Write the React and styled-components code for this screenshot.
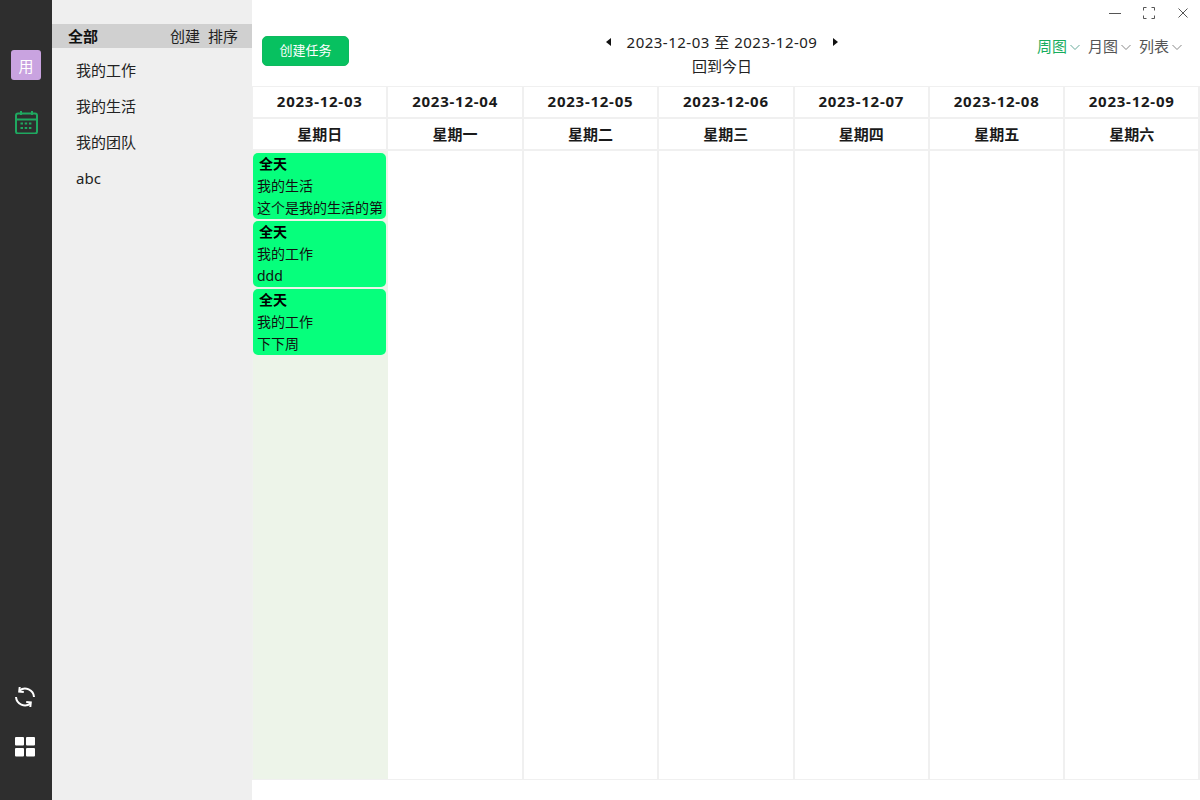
import React from 'react';
import styled, { createGlobalStyle } from 'styled-components';

const Global = createGlobalStyle`
  html, body { margin: 0; padding: 0; height: 100%; background: #fff; }
  #root { height: 100%; }
  * { box-sizing: border-box; }
  body { font-family: "Noto Sans", "Noto Sans CJK SC", sans-serif; font-size: 15px; color: #1a1a1a; }
`;

const Shell = styled.div`display: flex; width: 1200px; height: 800px; overflow: hidden; background: #fff;`;
const Rail = styled.nav`width: 52px; flex: none; background: #2e2e2e; display: flex; flex-direction: column; align-items: center; padding: 50px 0 43px;`;
const Avatar = styled.div`width: 30px; height: 30px; border-radius: 3px; background: #c9a3e0; color: #fff; font-size: 15px; display: flex; align-items: center; justify-content: center; margin-bottom: 30px;`;
const Spacer = styled.div`flex: 1;`;
const RailIcon = styled.div`display: flex; justify-content: center; margin-top: ${p => p.$gap || 0}px; margin-left: ${p => p.$shift || 0}px;`;

const Side = styled.aside`width: 200px; flex: none; background: #efefef; padding-top: 24px;`;
const SideHead = styled.div`height: 24px; background: #d0d0d0; display: flex; align-items: center; padding: 0 14px 2px 16px;`;
const SideTitle = styled.strong`font-weight: 700; font-size: 15px; color: #111; flex: 1;`;
const SideAction = styled.span`font-size: 15px; margin-left: 8px; color: #222;`;
const SideList = styled.ul`list-style: none; margin: 0; padding: 4px 0 0 24px;`;
const SideItem = styled.li`height: 36px; line-height: 36px; font-size: 15px; color: #222;`;

const Main = styled.main`flex: 1; display: flex; flex-direction: column; min-width: 0;`;
const TitleBar = styled.div`height: 24px; display: flex; justify-content: flex-end; align-items: center; gap: 20px; padding: 1px 10px 0 0;`;
const WinBtn = styled.svg`width: 14px; height: 14px; display: block; fill: none; stroke: #555; stroke-width: 1;`;
const Toolbar = styled.div`height: 62px; position: relative; display: flex; align-items: flex-start; justify-content: space-between; padding: 12px 18px 0 10px;`;
const Create = styled.button`width: 87px; height: 30px; border: 1px solid #0fb95e; border-radius: 5px; background: #07c160; color: #fff; font: inherit; font-size: 13px; padding: 0 0 3px; margin: 0;`;
const Center = styled.div`position: absolute; left: 0; right: 8px; top: 5px; display: flex; flex-direction: column; align-items: center; pointer-events: none;`;
const DateRow = styled.div`display: flex; align-items: center; height: 25px; font-size: 15px; letter-spacing: 0.5px; color: #222; gap: 15px;`;
const Today = styled.div`height: 24px; line-height: 24px; font-size: 15px; color: #222;`;
const Arrow = styled.svg`width: 6px; height: 8px; fill: #111; display: block;`;
const Views = styled.div`display: flex; gap: 8px; margin-top: -2px;`;
const View = styled.div`display: flex; align-items: center; gap: 3px; height: 23px; font-size: 15px; color: ${p => p.$active ? '#17ad5e' : '#555'};`;
const Chev = styled.svg`width: 10px; height: 10px; fill: none; stroke: ${p => p.$active ? '#6a9' : '#888'}; stroke-width: 1; margin-top: 2px;`;

const Board = styled.div`
  height: 694px; display: grid; grid-template-columns: repeat(6, 135.4px) 1fr; grid-template-rows: 32px 32px 1fr;
  border-top: 1px solid #f0f0f0; border-bottom: 1px solid #f0f0f0; border-left: 1px solid #f0f0f0;
`;
const HeadCell = styled.div`
  display: flex; align-items: center; justify-content: center; font-weight: 700; font-size: 15px; color: #1a1a1a;
  letter-spacing: ${p => p.$date ? '0.75px' : '0'};
  border-right: 2px solid #f0f0f0; border-bottom: 2px solid #f0f0f0; padding-bottom: 2px;
`;
const DayCol = styled.div`
  border-right: 2px solid ${p => p.$today ? 'transparent' : '#f0f0f0'}; background: ${p => p.$today ? '#edf4e9' : '#fff'};
  padding: 2px 0 0 0; display: flex; flex-direction: column; gap: 2px; min-width: 0;
`;
const Task = styled.div`height: 66px; width: 133px; background: #06ff7c; border-radius: 5px; padding: 1px 0 0 4px; font-size: 14px; color: #111;`;
const TaskLine = styled.div`height: 22px; line-height: 20px; white-space: nowrap; font-size: 14px; ${p => p.$bold ? 'font-weight: 700; padding-left: 2px; color: #000;' : ''}`;

const dates = ['03', '04', '05', '06', '07', '08', '09'];
const weeks = ['星期日', '星期一', '星期二', '星期三', '星期四', '星期五', '星期六'];
const tasks = [
  ['我的生活', '这个是我的生活的第'],
  ['我的工作', 'ddd'],
  ['我的工作', '下下周'],
];

const Caret = ({ active }) => <Chev $active={active} viewBox="0 0 10 10"><path d="M0.5 3 L5 7.5 L9.5 3" /></Chev>;

export default function App() {
  return (
    <Shell>
      <Global />
      <Rail>
        <Avatar>用</Avatar>
        <RailIcon>
          <svg width="24" height="24" viewBox="0 0 24 24" fill="none" stroke="#1fa860" strokeWidth="2">
            <rect x="2" y="3.5" width="21" height="20" rx="2" />
            <path d="M2 9.5h21M7 1v4M18 1v4" />
            <path d="M6.5 13.5h12M6.5 18h12" strokeDasharray="2.5 1.7" strokeWidth="1.8" />
          </svg>
        </RailIcon>
        <Spacer />
        <RailIcon $shift={-2}>
          <svg width="22" height="22" viewBox="0 0 22 22" fill="none" stroke="#fff" strokeWidth="2">
            <path d="M20 11 A9 9 0 0 0 5.5 4.5" />
            <path d="M5.7 1 L5.2 5.6 L9.8 6" />
            <path d="M2 11 A9 9 0 0 0 16.5 17.5" />
            <path d="M16.3 21 L16.8 16.4 L12.2 16" />
          </svg>
        </RailIcon>
        <RailIcon $gap={29} $shift={-2}>
          <svg width="20" height="20" viewBox="0 0 20 20" fill="#fff">
            <rect x="0" y="0" width="9" height="8.5" rx="1" />
            <rect x="11" y="0" width="9" height="8.5" rx="1" />
            <rect x="0" y="11" width="9" height="8.5" rx="1" />
            <rect x="11" y="11" width="9" height="8.5" rx="1" />
          </svg>
        </RailIcon>
      </Rail>
      <Side>
        <SideHead>
          <SideTitle>全部</SideTitle>
          <SideAction>创建</SideAction>
          <SideAction>排序</SideAction>
        </SideHead>
        <SideList>
          <SideItem>我的工作</SideItem>
          <SideItem>我的生活</SideItem>
          <SideItem>我的团队</SideItem>
          <SideItem>abc</SideItem>
        </SideList>
      </Side>
      <Main>
        <TitleBar>
          <WinBtn viewBox="0 0 14 14"><path d="M1 7.5h12" /></WinBtn>
          <WinBtn viewBox="0 0 14 14"><path d="M1.5 4.5v-3h3M9.5 1.5h3v3M12.5 9.5v3h-3M4.5 12.5h-3v-3" /></WinBtn>
          <WinBtn viewBox="0 0 14 14"><path d="M2.5 2.5l9 9M11.5 2.5l-9 9" /></WinBtn>
        </TitleBar>
        <Toolbar>
          <Create>创建任务</Create>
          <Center>
            <DateRow>
              <Arrow viewBox="0 0 6 8"><path d="M5 0v8L0 4z" /></Arrow>
              <span>2023-12-03 至 2023-12-09</span>
              <Arrow viewBox="0 0 6 8"><path d="M1 0v8l5-4z" /></Arrow>
            </DateRow>
            <Today>回到今日</Today>
          </Center>
          <Views>
            <View $active>周图<Caret active /></View>
            <View>月图<Caret /></View>
            <View>列表<Caret /></View>
          </Views>
        </Toolbar>
        <Board>
          {dates.map(d => <HeadCell key={d} $date>2023-12-{d}</HeadCell>)}
          {weeks.map(w => <HeadCell key={w}>{w}</HeadCell>)}
          {dates.map((d, i) => (
            <DayCol key={d} $today={i === 0}>
              {i === 0 && tasks.map((t, k) => (
                <Task key={k}>
                  <TaskLine $bold>全天</TaskLine>
                  <TaskLine>{t[0]}</TaskLine>
                  <TaskLine>{t[1]}</TaskLine>
                </Task>
              ))}
            </DayCol>
          ))}
        </Board>
      </Main>
    </Shell>
  );
}
